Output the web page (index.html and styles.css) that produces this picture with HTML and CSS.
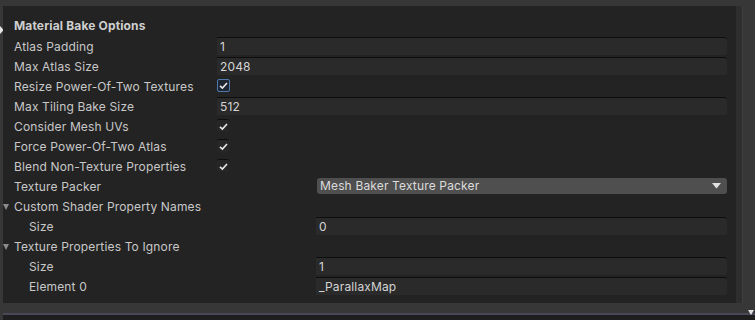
FILE: index.html
```html
<!DOCTYPE html>
<html lang="en">
<head>
  <meta charset="UTF-8" />
  <title>Material Bake Options</title>
  <link rel="stylesheet" href="styles.css">
</head>
<body>
  <div class="cursor"></div>
  <div class="janela">
    <div class="painel">
      <div class="linha titulo">Material Bake Options</div>

      <div class="linha">
        <span class="rotulo">Atlas Padding</span>
        <span class="campo">1</span>
      </div>
      <div class="linha">
        <span class="rotulo">Max Atlas Size</span>
        <span class="campo">2048</span>
      </div>
      <div class="linha">
        <span class="rotulo">Resize Power-Of-Two Textures</span>
        <span class="caixa foco">
          <svg width="11" height="11" viewBox="0 0 11 11"><polyline points="2,5.8 4.4,8 9,3" fill="none" stroke="#e8e8e8" stroke-width="1.6"/></svg>
        </span>
      </div>
      <div class="linha">
        <span class="rotulo">Max Tiling Bake Size</span>
        <span class="campo">512</span>
      </div>
      <div class="linha">
        <span class="rotulo">Consider Mesh UVs</span>
        <span class="caixa">
          <svg width="11" height="11" viewBox="0 0 11 11"><polyline points="2,5.8 4.4,8 9,3" fill="none" stroke="#e8e8e8" stroke-width="1.6"/></svg>
        </span>
      </div>
      <div class="linha">
        <span class="rotulo">Force Power-Of-Two Atlas</span>
        <span class="caixa">
          <svg width="11" height="11" viewBox="0 0 11 11"><polyline points="2,5.8 4.4,8 9,3" fill="none" stroke="#e8e8e8" stroke-width="1.6"/></svg>
        </span>
      </div>
      <div class="linha">
        <span class="rotulo">Blend Non-Texture Properties</span>
        <span class="caixa">
          <svg width="11" height="11" viewBox="0 0 11 11"><polyline points="2,5.8 4.4,8 9,3" fill="none" stroke="#e8e8e8" stroke-width="1.6"/></svg>
        </span>
      </div>
      <div class="linha">
        <span class="rotulo">Texture Packer</span>
        <span class="lista">
          Mesh Baker Texture Packer
          <svg width="9" height="6" viewBox="0 0 9 6"><polygon points="0,0 9,0 4.5,5.5" fill="#e0e0e0"/></svg>
        </span>
      </div>

      <div class="linha dobra">
        <span class="rotulo"><i class="seta"></i>Custom Shader Property Names</span>
      </div>
      <div class="linha sub">
        <span class="rotulo">Size</span>
        <span class="campo">0</span>
      </div>

      <div class="linha dobra">
        <span class="rotulo"><i class="seta"></i>Texture Properties To Ignore</span>
      </div>
      <div class="linha sub">
        <span class="rotulo">Size</span>
        <span class="campo">1</span>
      </div>
      <div class="linha sub">
        <span class="rotulo">Element 0</span>
        <span class="campo">_ParallaxMap</span>
      </div>
    </div>
    <div class="barra"></div>
  </div>
  <div class="rodape">
    <i class="seta-rodape"></i>
  </div>
</body>
</html>
```

FILE: styles.css
```css
body {
  margin: 0;
  background: #373737;
  font-family: Inter, "Noto Sans", sans-serif;
  font-size: 12px;
  letter-spacing: 0.15px;
  color: #c8c8c8;
  width: 755px;
  height: 320px;
  overflow: hidden;
  position: relative;
}

.cursor {
  position: absolute;
  left: 0;
  top: 26px;
  width: 3px;
  height: 8px;
  background: #e6e6e6;
  clip-path: polygon(0 0, 100% 40%, 100% 60%, 0 100%);
}

.janela {
  display: flex;
  padding-top: 6px;
  padding-left: 3px;
}

.painel {
  width: 733px;
  height: 297px;
  box-sizing: border-box;
  background: #232323;
  padding: 9px 9px 0 0;
}

.barra {
  width: 6px;
  height: 297px;
  background: #2e2e2e;
  border-right: 1px solid #3f3f3f;
}

.linha {
  display: flex;
  align-items: flex-start;
  height: 20px;
}

.titulo {
  padding-left: 11px;
  padding-top: 1px;
  font-weight: bold;
  line-height: 20px;
  color: #cfcfcf;
}

.rotulo {
  width: 203px;
  padding-left: 11px;
  padding-top: 1px;
  flex: none;
  line-height: 20px;
  white-space: nowrap;
  position: relative;
}

.sub .rotulo {
  width: 287px;
  padding-left: 26px;
}

.campo {
  flex: 1;
  margin-top: 1px;
  height: 17px;
  line-height: 17px;
  border-top: 1px solid #0e0e0e;
  background: #2a2a2a;
  border-radius: 0 3px 3px 0;
  padding-left: 3px;
  color: #d4d4d4;
}

.caixa {
  margin-top: 3px;
  width: 12px;
  height: 12px;
  border-top: 1px solid #0e0e0e;
  background: #262626;
  border-radius: 2px;
  display: flex;
  align-items: center;
  justify-content: center;
}

.caixa.foco {
  width: 11px;
  height: 11px;
  border: 1px solid #4f79ad;
  background: #1d2633;
}

.lista {
  flex: 1;
  margin-left: 100px;
  margin-top: 2px;
  height: 16px;
  line-height: 16px;
  background: #4f4f4f;
  border-radius: 3px;
  padding: 0 6px 0 3px;
  display: flex;
  justify-content: space-between;
  align-items: center;
  color: #dcdcdc;
}

.seta {
  position: absolute;
  left: 0;
  top: 8px;
  width: 0;
  height: 0;
  border-left: 3.5px solid transparent;
  border-right: 3.5px solid transparent;
  border-top: 6px solid #8a8a8a;
}

.rodape {
  margin-top: 10px;
  height: 7px;
  border-top: 2px solid #4a4858;
  background: #1e1e1e;
  margin-left: 3px;
  position: relative;
}

.seta-rodape {
  position: absolute;
  right: 1px;
  top: -5px;
  width: 0;
  height: 0;
  border-left: 3.5px solid transparent;
  border-right: 3.5px solid transparent;
  border-top: 5px solid #e0e0e0;
}
```
